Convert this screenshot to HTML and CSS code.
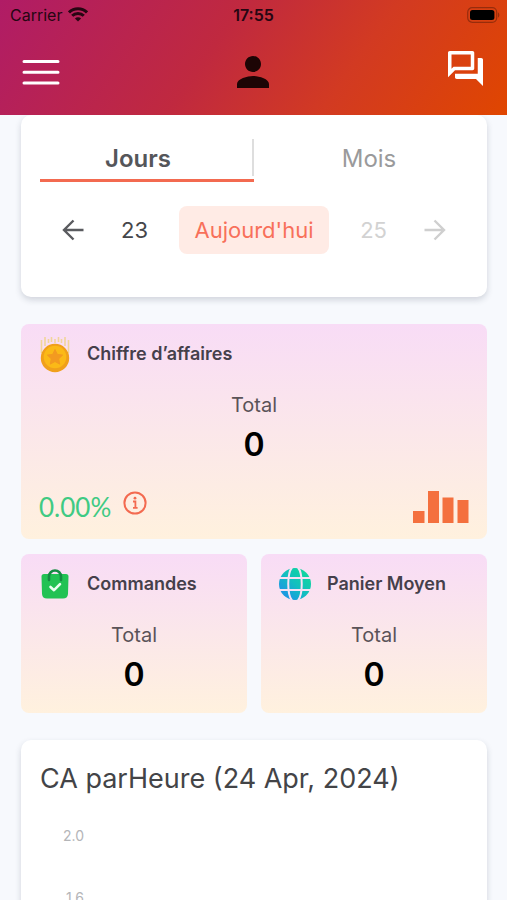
FILE: index.html
```html
<!DOCTYPE html>
<html lang="fr">
<head>
  <meta charset="utf-8">
  <meta name="viewport" content="width=device-width, initial-scale=1">
  <title>Tableau de bord</title>
  <link rel="stylesheet" href="styles.css">
</head>
<body>
  <div class="app">
    <header class="header">
      <div class="status">
        <div class="status-left">
          <span>Carrier</span>
          <svg width="20" height="15" viewBox="0 0 20 15" fill="none" stroke="currentColor" stroke-width="3" aria-hidden="true">
            <path d="M1 5.4a12.8 12.8 0 0 1 18 0"/>
            <path d="M4.2 8.8a8.2 8.2 0 0 1 11.6 0"/>
            <path d="M10 14.6 6.900 11.500a4.400 4.400 0 0 1 6.200 0z" fill="currentColor" stroke="none"/>
          </svg>
        </div>
        <time class="status-time">17:55</time>
        <svg class="battery" width="33" height="16" viewBox="0 0 33 16" aria-hidden="true">
          <rect x="0.700" y="0.700" width="29" height="14.600" rx="4.500" fill="none" stroke="#000" stroke-opacity=".3" stroke-width="1.200"/>
          <rect x="3" y="3" width="24.400" height="10" rx="2.500" fill="#000"/>
          <path d="M31 5.500c1.800.6 1.800 4.400 0 5z" fill="#000" fill-opacity=".3"/>
        </svg>
      </div>
      <nav class="nav">
        <button class="icon-button" type="button" aria-label="Menu">
          <svg width="38" height="26" viewBox="0 0 38 26" stroke="#fff" stroke-width="3" stroke-linecap="round">
            <path d="M2 2.500h34M2 13.200h34M2 24h34"/>
          </svg>
        </button>
        <button class="icon-button" type="button" aria-label="Profil">
          <svg width="32" height="32" viewBox="4 4 16 16" fill="#1d0505">
            <path d="M12 12c2.210 0 4-1.790 4-4s-1.790-4-4-4-4 1.790-4 4 1.790 4 4 4zm0 2c-2.670 0-8 1.340-8 4v2h16v-2c0-2.660-5.330-4-8-4z"/>
          </svg>
        </button>
        <button class="icon-button chat" type="button" aria-label="Messages">
          <svg width="35" height="35" viewBox="2 2 20 20" fill="#fff">
            <path d="M15 4v7H5.170L4 12.170V4h11m1-2H3c-.55 0-1 .45-1 1v14l4-4h10c.55 0 1-.45 1-1V3c0-.55-.45-1-1-1zm5 4h-2v9H6v2c0 .55.45 1 1 1h11l4 4V7c0-.55-.45-1-1-1z"/>
          </svg>
        </button>
      </nav>
    </header>

    <main class="content">
      <section class="panel period">
        <div class="tabs" role="tablist">
          <button class="tab active" type="button" role="tab" aria-selected="true">Jours</button>
          <button class="tab" type="button" role="tab" aria-selected="false">Mois</button>
        </div>
        <div class="dates">
          <div class="dates-side">
            <button class="icon-button" type="button" aria-label="Jour précédent">
              <svg width="22" height="22" viewBox="0 0 22 22" fill="none" stroke="#5a5b5f" stroke-width="2.400">
                <path d="M21.500 11H2M11.500 1.500 2 11l9.500 9.500"/>
              </svg>
            </button>
            <button class="day" type="button">23</button>
          </div>
          <button class="day today" type="button">Aujourd'hui</button>
          <div class="dates-side next">
            <button class="day" type="button" disabled>25</button>
            <button class="icon-button" type="button" aria-label="Jour suivant" disabled>
              <svg width="22" height="22" viewBox="0 0 22 22" fill="none" stroke="#cfcfcf" stroke-width="2.400">
                <path d="M.5 11H20M10.500 1.500 20 11l-9.500 9.500"/>
              </svg>
            </button>
          </div>
        </div>
      </section>

      <section class="stats">
        <article class="stat wide">
          <header class="stat-head">
            <svg width="32" height="38" viewBox="0 0 32 38" aria-hidden="true">
              <path d="M2.500 5v13M6 2v9M9.500 4v4M12.500 2v5M16 4v4M19.500 2v5M22.500 4v4M26 2v9M29.500 5v13" stroke="#f1d59b" stroke-width="1.600"/>
              <circle cx="16" cy="23" r="14.200" fill="#f0a01b"/>
              <circle cx="16" cy="22" r="11.300" fill="#fbb917"/>
              <path d="m16 14.500 2.300 4.900 5.300.7-3.900 3.700 1 5.300-4.700-2.600-4.700 2.600 1-5.300-3.900-3.700 5.300-.7z" fill="#f39a20" stroke="#f39a20" stroke-linejoin="round"/>
            </svg>
            <h2>Chiffre d’affaires</h2>
          </header>
          <p class="label">Total</p>
          <p class="value">0</p>
          <footer class="stat-foot">
            <span class="rate">0.00%</span>
            <button class="icon-button info" type="button" aria-label="Informations">
              <svg width="24" height="24" viewBox="0 0 24 24" fill="none" stroke="#f36a50" stroke-width="2">
                <circle cx="12" cy="12" r="10.600"/>
                <path d="M10 10.500h2.400v6M10 16.800h4.600" stroke-width="1.800"/>
                <circle cx="12" cy="7.200" r="1.400" fill="#f36a50" stroke="none"/>
              </svg>
            </button>
            <button class="icon-button bars" type="button" aria-label="Graphique">
              <svg width="56" height="32" viewBox="0 0 56 32" fill="#f4703e">
                <path d="M0 20h11.500v12H0zM15 0h11v32H15zM29.500 6.500h11V32h-11zM44.500 9h11v23h-11z"/>
              </svg>
            </button>
          </footer>
        </article>

        <article class="stat">
          <header class="stat-head">
            <svg width="32" height="38" viewBox="0 0 32 38" aria-hidden="true">
              <path d="M5 9h22a2.500 2.500 0 0 1 2.500 2.500L29 29a5 5 0 0 1-5 4.500H8A5 5 0 0 1 3 29l-.5-17.500A2.500 2.500 0 0 1 5 9z" fill="#22c253"/>
              <path d="M10 15v-3.500a6 6 0 0 1 12 0V15" fill="none" stroke="#158c43" stroke-width="2.600" stroke-linecap="round"/>
              <path d="m11.500 22 3.500 3.200 6-6" fill="none" stroke="#eafff0" stroke-width="2.600" stroke-linecap="round" stroke-linejoin="round"/>
            </svg>
            <h2>Commandes</h2>
          </header>
          <p class="label">Total</p>
          <p class="value">0</p>
        </article>

        <article class="stat">
          <header class="stat-head">
            <svg width="32" height="38" viewBox="0 0 32 38" aria-hidden="true">
              <defs>
                <linearGradient id="globe" x1="0" y1="1" x2="1" y2="0">
                  <stop offset=".2" stop-color="#1c9be0"/>
                  <stop offset=".5" stop-color="#12bfc0"/>
                  <stop offset=".9" stop-color="#10d99a"/>
                </linearGradient>
              </defs>
              <circle cx="16" cy="19" r="16" fill="url(#globe)"/>
              <path d="M0 13h32M0 25h32M13 2.500C8 8.500 8 29.500 13 35.500M19 2.500c5 6 5 27 0 33" fill="none" stroke="#f8e0f3" stroke-width="2"/>
            </svg>
            <h2>Panier Moyen</h2>
          </header>
          <p class="label">Total</p>
          <p class="value">0</p>
        </article>
      </section>

      <section class="panel chart">
        <h2>CA parHeure (24 Apr, 2024)</h2>
        <ol class="axis">
          <li>2.0</li>
          <li>1.6</li>
        </ol>
      </section>
    </main>
  </div>
</body>
</html>
```
FILE: styles.css
```css
* {
  box-sizing: border-box;
}

body {
  margin: 0;
  background: #f7f9fd;
  color: #45464a;
  font-family: Inter, "Liberation Sans", sans-serif;
}

h2,
p,
ol {
  margin: 0;
  padding: 0;
}

button {
  padding: 0;
  border: 0;
  background: none;
  color: inherit;
  font: inherit;
}

svg {
  display: block;
}

.app {
  display: flex;
  flex-direction: column;
  height: 100vh;
}

.header {
  flex: none;
  background: linear-gradient(125deg, #b01c66 0%, #c0293f 42%, #d23a22 68%, #e04600 100%);
}

.status {
  display: grid;
  grid-template-columns: 1fr auto 1fr;
  align-items: center;
  height: 29px;
  padding: 0 7px;
  color: #260612;
  font-size: 16px;
}

.status-left {
  display: flex;
  align-items: center;
  gap: 6px;
  padding-left: 3px;
}

.status-time {
  font-weight: 600;
}

.battery {
  justify-self: end;
}

.nav {
  display: grid;
  grid-template-columns: 1fr auto 1fr;
  align-items: center;
  justify-items: start;
  height: 86px;
  padding: 0 24px 0 22px;
}

.chat {
  justify-self: end;
  padding-bottom: 7px;
}

.content {
  flex: 1;
  min-height: 0;
  padding: 0 20px 0 21px;
  overflow-y: auto;
  scrollbar-width: none;
}

.panel {
  border-radius: 10px;
  background: #fff;
  box-shadow: 0 3px 6px rgba(40, 50, 70, 0.18);
}

.period {
  padding: 24px 19px 43px;
}

.tabs {
  display: grid;
  grid-template-columns: 1fr 1fr;
}

.tab {
  height: 43px;
  padding: 0 0 2px 16px;
  border-bottom: 3px solid transparent;
  color: #9a9a9b;
  font-size: 24px;
}

.tab.active {
  padding: 0 18px 2px 0;
  border-bottom-color: #f36a50;
  background: linear-gradient(#dedede, #dedede) right top / 2px 37px no-repeat;
  color: #55565a;
  font-weight: 600;
}

.dates {
  display: grid;
  grid-template-columns: 1fr auto 1fr;
  align-items: center;
  margin-top: 24px;
}

.dates-side {
  display: flex;
  align-items: center;
  gap: 37px;
  padding-left: 22px;
}

.dates-side.next {
  justify-content: flex-end;
  padding: 0 22px 0 0;
}

.day {
  font-size: 22px;
}

.day:disabled {
  color: #d2d2d2;
}

.today {
  height: 48px;
  padding: 0 15px;
  border-radius: 8px;
  background: #ffebe5;
  color: #f8705a;
}

.stats {
  display: grid;
  grid-template-columns: 1fr 1fr;
  gap: 15px 14px;
  margin: 27px 0;
}

.stat {
  padding: 11px 18px 18px;
  border-radius: 8px;
  background: linear-gradient(#f8dcf6, #fbe7ea 50%, #fff1de);
}

.wide {
  grid-column: 1 / -1;
  padding-bottom: 14px;
}

.stat-head {
  display: flex;
  align-items: center;
  gap: 16px;
}

.stat-head h2 {
  color: #45404b;
  font-size: 18px;
  font-weight: 600;
  line-height: 38px;
}

.label {
  margin-top: 18px;
  color: #5a5358;
  font-size: 20px;
  line-height: 28px;
  text-align: center;
}

.value {
  margin-top: 6px;
  color: #000;
  font-size: 32px;
  font-weight: 600;
  line-height: 40px;
  text-align: center;
}

.stat-foot {
  display: flex;
  align-items: center;
  gap: 12px;
  margin-top: 24px;
}

.rate {
  color: #3fca83;
  font-family: Lato, Inter, sans-serif;
  font-size: 26px;
  font-weight: 400;
  line-height: 36px;
}

.info {
  padding-bottom: 8px;
}

.bars {
  margin-left: auto;
}

.chart {
  min-height: 400px;
  padding: 20px 19px;
}

.chart h2 {
  color: #434447;
  font-size: 27px;
  font-weight: 400;
  line-height: 38px;
}

.axis {
  width: 44px;
  margin-top: 29px;
  list-style: none;
  color: #b4b5b8;
  font-size: 14px;
  line-height: 18px;
  text-align: right;
}

.axis li {
  height: 62px;
}
```
